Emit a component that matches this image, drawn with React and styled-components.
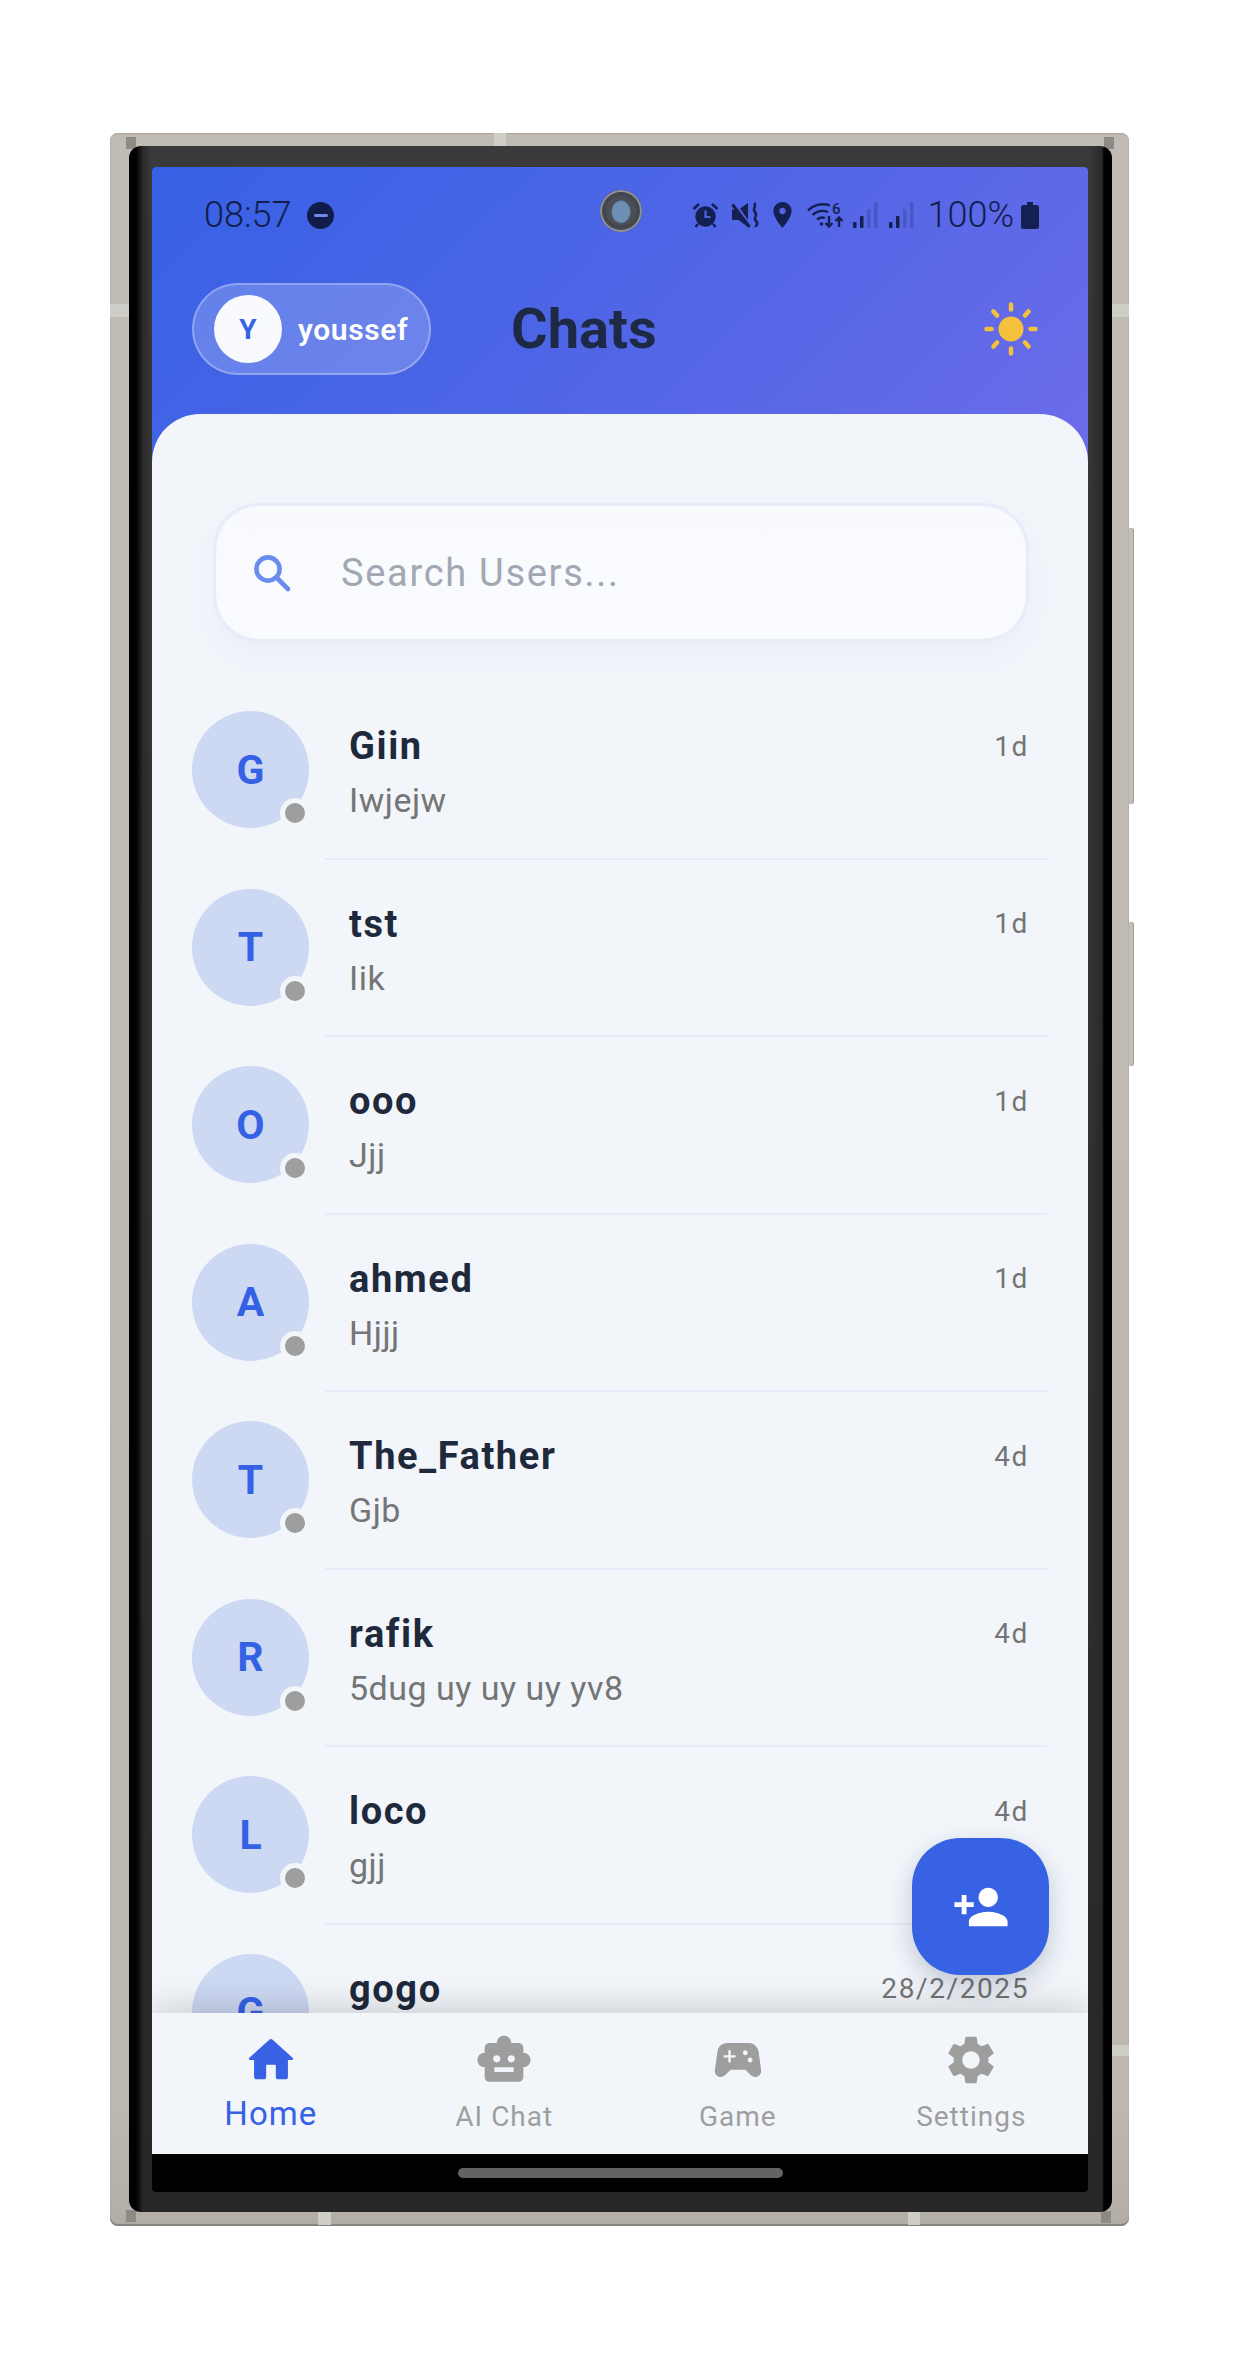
import styled, { createGlobalStyle } from 'styled-components'
import { MdPersonAdd, MdSettings, MdSmartToy, MdSportsEsports } from 'react-icons/md'

const GlobalStyle = createGlobalStyle`
  html, body {
    margin: 0;
    padding: 0;
    background: #fff;
  }
  * {
    box-sizing: border-box;
  }
`

const Page = styled.div`
  width: 1245px;
  height: 2359px;
  padding: 133px 0 0 110px;
  font-family: Roboto, "Liberation Sans", sans-serif;
`

// the phone body
const Frame = styled.div`
  position: relative;
  width: 1019px;
  height: 2093px;
  padding: 13px 17px 14px 19px;
  border-radius: 8px;
  background: linear-gradient(180deg, #c0bbb4 0%, #bdb8b0 94%, #b2ada5 100%);
  box-shadow: inset 0 -2px 1px #85817a, inset 0 1px 1px #a8a39c;
`

const Seam = styled.span`
  position: absolute;
  top: ${p => p.$top}px;
  left: ${p => p.$left}px;
  width: ${p => p.$w}px;
  height: ${p => p.$h}px;
  background: #cfcdc8;
`

const Notch = styled.span`
  position: absolute;
  top: ${p => p.$top}px;
  left: ${p => p.$left}px;
  width: 10px;
  height: 12px;
  background: #8f8a83;
`

const SideButton = styled.span`
  position: absolute;
  top: ${p => p.$top}px;
  right: -5px;
  width: 5px;
  height: ${p => p.$h}px;
  border-radius: 0 3px 3px 0;
  background: #c4c0b9;
  box-shadow: inset -1px 0 0 #a19c95;
`

const Bezel = styled.div`
  position: relative;
  width: 983px;
  height: 2066px;
  padding: 21px 24px 20px 23px;
  border-radius: 12px;
  background:
    linear-gradient(90deg, #000 0 7px, rgba(40, 40, 40, 0.9) 14px, transparent 23px, transparent 959px, rgba(40, 40, 40, 0.9) 973px, #000 975px, #000 100%),
    linear-gradient(180deg, #3a3a3a 0%, #333 50%, #272727 100%);
`

const BezelTop = styled.div`
  display: flex;
  flex-direction: column;
  height: 100%;
  border-radius: 4px;
  overflow: hidden;
  background: #000;
`

const AppArea = styled.div`
  position: relative;
  display: flex;
  flex-direction: column;
  height: 1987px;
  overflow: hidden;
`

const HomeBarArea = styled.div`
  flex: 1;
  display: flex;
  justify-content: center;
  padding-top: 14px;
`

const HomeBar = styled.div`
  width: 325px;
  height: 10px;
  border-radius: 5px;
  background: #636363;
`

const Header = styled.header`
  height: 295px;
  flex-shrink: 0;
  background: linear-gradient(135deg, #3761e5 0%, #4c65e6 45%, #6c6ce9 100%);
`

const StatusBar = styled.div`
  display: flex;
  align-items: center;
  height: 96px;
  padding: 0 49px 0 52px;
  color: #121d4c;
`

const Clock = styled.span`
  font-size: 36px;
  font-weight: 300;
  line-height: 1;
`

const DndBadge = styled.span`
  display: flex;
  align-items: center;
  justify-content: center;
  width: 27px;
  height: 27px;
  margin-left: 16px;
  border-radius: 50%;
  background: #111c4b;

  &::after {
    content: "";
    width: 14px;
    height: 3px;
    border-radius: 2px;
    background: #6f8ae8;
  }
`

const StatusRight = styled.div`
  display: flex;
  align-items: center;
  margin-left: auto;
`

const StatusIcon = styled.svg`
  display: block;
  flex-shrink: 0;
  margin-left: ${p => p.$gap || 0}px;
  fill: #14204f;
  overflow: visible;
`

const BatteryText = styled.span`
  margin-left: 13px;
  font-size: 36px;
  font-weight: 300;
  line-height: 1;
`

const Camera = styled.div`
  position: absolute;
  top: 23px;
  left: 448px;
  width: 42px;
  height: 42px;
  border-radius: 50%;
  background: radial-gradient(ellipse 10px 12px at 50% 52%, #6d8fb3 0 85%, #4b4e57 100%);
  box-shadow: inset 0 0 0 2px #8d9098, inset 0 0 0 6px #45474f;
`

const TitleBar = styled.div`
  display: flex;
  align-items: center;
  height: 92px;
  margin-top: 20px;
  padding: 0 50px 0 40px;
`

const UserPill = styled.div`
  display: flex;
  align-items: center;
  width: 239px;
  height: 92px;
  padding-left: 20px;
  border: 2px solid rgba(255, 255, 255, 0.28);
  border-radius: 46px;
  background: rgba(255, 255, 255, 0.2);
`

const UserAvatar = styled.div`
  display: flex;
  align-items: center;
  justify-content: center;
  width: 68px;
  height: 68px;
  border-radius: 50%;
  background: #f8fafd;
  color: #3362e4;
  font-size: 28px;
  font-weight: 700;
`

const UserName = styled.span`
  margin-left: 16px;
  color: #fff;
  font-size: 30px;
  font-weight: 600;
  letter-spacing: 0.6px;
`

const Title = styled.h1`
  margin: 0 0 0 80px;
  color: #1e2a45;
  font-size: 56px;
  font-weight: 700;
  line-height: 1;
`

const SunButton = styled.div`
  display: flex;
  margin-left: auto;
`

const Sheet = styled.main`
  flex: 1;
  min-height: 0;
  margin-top: -48px;
  padding-top: 93px;
  border-radius: 48px 48px 0 0;
  background: #f2f6fb;
  overflow: hidden;
`

const SearchBox = styled.div`
  display: flex;
  align-items: center;
  width: 808px;
  height: 131px;
  margin: 0 0 44px 65px;
  padding-left: 31px;
  border-radius: 42px;
  background: linear-gradient(180deg, #f8fafd, #fafbfe);
  box-shadow: 0 0 0 1px #f6f8fc, 0 0 0 4px #e6edf9, 0 14px 34px rgba(60, 90, 170, 0.06);
`

const SearchIcon = styled.svg`
  display: block;
  width: 48px;
  height: 48px;
  fill: none;
  stroke: #6a8deb;
  stroke-width: 2.3;
  stroke-linecap: round;
`

const Placeholder = styled.span`
  margin-left: 45px;
  color: #a1a8b4;
  font-size: 38px;
  letter-spacing: 1.7px;
`

const Row = styled.div`
  display: flex;
  height: 177.5px;
  padding-left: 40px;
`

const Avatar = styled.div`
  position: relative;
  display: flex;
  align-items: center;
  justify-content: center;
  flex-shrink: 0;
  width: 117px;
  height: 117px;
  margin-top: 29px;
  border-radius: 50%;
  background: #cdd8f3;
  color: #3562e5;
  font-size: 41px;
  font-weight: 700;
`

const StatusDot = styled.span`
  position: absolute;
  right: -1px;
  bottom: 0;
  width: 30px;
  height: 30px;
  border: 5px solid #f2f6fb;
  border-radius: 50%;
  background: #9e9e9e;
`

const RowBody = styled.div`
  flex: 1;
  display: flex;
  flex-direction: column;
  justify-content: center;
  margin: 0 41px 0 16px;
  padding: 6px 18px 0 24px;
  border-bottom: 2px solid #e6ecf7;
`

const TopLine = styled.div`
  display: flex;
  align-items: center;
  justify-content: space-between;
  height: 46px;
`

const Name = styled.span`
  color: #1e293b;
  font-size: 38px;
  font-weight: 700;
  letter-spacing: 1.6px;
`

const Time = styled.span`
  color: #757575;
  font-size: 28px;
  letter-spacing: 1.6px;
`

const Message = styled.div`
  height: 44px;
  margin-top: 9px;
  color: #757575;
  font-size: 34px;
  line-height: 44px;
  letter-spacing: 0.5px;
`

const Fab = styled.button`
  position: absolute;
  right: 39px;
  bottom: 179px;
  display: flex;
  align-items: center;
  justify-content: center;
  width: 137px;
  height: 137px;
  padding: 0;
  border: 0;
  border-radius: 48px;
  background: #3762e4;
  color: #fff;
  box-shadow: 0 10px 26px rgba(20, 30, 60, 0.22);
`

const BottomNav = styled.nav`
  position: relative;
  display: grid;
  grid-template-columns: repeat(4, 1fr);
  flex-shrink: 0;
  height: 141px;
  padding: 18px 0 0 2px;
  background: #f2f6fb;
  box-shadow: 0 -5px 32px rgba(0, 0, 0, 0.17);
`

const NavItem = styled.div`
  display: flex;
  flex-direction: column;
  align-items: center;
  color: ${p => (p.$active ? '#3762e4' : '#9e9e9e')};
`

const NavIcon = styled.svg`
  display: block;
  width: 58px;
  height: 58px;
  fill: currentColor;
`

const NavLabel = styled.span`
  margin-top: ${p => (p.$active ? 0 : 3)}px;
  font-size: ${p => (p.$active ? 33 : 28)}px;
  line-height: 50px;
  letter-spacing: 1px;
`

const chats = [
  { name: 'Giin', message: 'Iwjejw', time: '1d' },
  { name: 'tst', message: 'Iik', time: '1d' },
  { name: 'ooo', message: 'Jjj', time: '1d' },
  { name: 'ahmed', message: 'Hjjj', time: '1d' },
  { name: 'The_Father', message: 'Gjb', time: '4d' },
  { name: 'rafik', message: '5dug uy uy uy yv8', time: '4d' },
  { name: 'loco', message: 'gjj', time: '4d' },
  { name: 'gogo', message: '', time: '28/2/2025' },
]

const AlarmIcon = () => (
  <StatusIcon width="27" height="26" viewBox="0 0 27 26">
    <circle cx="13.5" cy="14.5" r="10.2" />
    <path d="M13.5 8.500v6.500h5" fill="none" stroke="#4c65e6" strokeWidth="2.2" />
    <path d="M1.500 7 7 2M25.500 7 20 2M6 22l-2.500 3M21 22l2.500 3" fill="none" stroke="#14204f" strokeWidth="2.6" />
  </StatusIcon>
)

const MuteIcon = () => (
  <StatusIcon $gap={13} width="27" height="26" viewBox="0 0 27 26">
    <path d="M0 7.500h6.500L16 1v24l-9.500-7H0z" />
    <path d="M3 1.500 19 25" fill="none" stroke="#4f66e7" strokeWidth="3" />
    <path d="M0.500 2.500 17.500 25" fill="none" stroke="#14204f" strokeWidth="3" />
    <path d="M22 1c3.500 3.500-2.500 5.500 1 9s-2.500 5.500 1 9-1 4 0 6" fill="none" stroke="#14204f" strokeWidth="2.600" />
  </StatusIcon>
)

const PinIcon = () => (
  <StatusIcon $gap={13} width="21" height="26" viewBox="5 2 14 20">
    <path d="M12 2C8.130 2 5 5.130 5 9c0 5.250 7 13 7 13s7-7.750 7-13c0-3.870-3.130-7-7-7zm0 9.500c-1.380 0-2.500-1.120-2.500-2.500s1.120-2.500 2.500-2.500 2.500 1.120 2.500 2.500-1.120 2.500-2.500 2.500z" />
  </StatusIcon>
)

const WifiIcon = () => (
  <StatusIcon $gap={14} width="38" height="28" viewBox="0 0 38 28">
    <g fill="none" stroke="#14204f" strokeWidth="2.400">
      <path d="M1 9.500C6 4 15 1.500 23 4.500" />
      <path d="M5.500 14C10 10 16 9 21 11" />
      <path d="M10 18.500c2.500-2 5.500-2.500 8-1.500" />
      <path d="M22 15v10M18.500 22l3.500 3.500 3.500-3.500M32 26V17M28.500 20l3.500-3.500 3.500 3.500" />
    </g>
    <circle cx="14.500" cy="23" r="1.800" />
    <text x="25" y="13" fontFamily="Roboto, sans-serif" fontSize="15" fontWeight="500" fill="#14204f">6</text>
  </StatusIcon>
)

const SignalIcon = ({ gap }) => (
  <StatusIcon $gap={gap} width="25" height="26" viewBox="0 0 25 26">
    <rect x="0" y="20" width="3.500" height="6" rx="1" />
    <rect x="7" y="14" width="3.500" height="12" rx="1" />
    <rect x="14" y="7" width="3.500" height="19" fill="#14204f" opacity="0.22" />
    <rect x="21" y="0" width="3.500" height="26" fill="#14204f" opacity="0.22" />
  </StatusIcon>
)

const BatteryIcon = () => (
  <StatusIcon $gap={7} width="18" height="27" viewBox="0 0 18 27">
    <path d="M6 0h6v3h3.500A2.500 2.500 0 0 1 18 5.500V24.500A2.500 2.500 0 0 1 15.500 27h-13A2.500 2.500 0 0 1 0 24.500V5.500A2.500 2.500 0 0 1 2.500 3H6z" />
  </StatusIcon>
)

const SunIcon = () => (
  <svg width="54" height="54" viewBox="0 0 54 54" fill="#f5c03c">
    <circle cx="27" cy="27" r="12.500" />
    <g stroke="#f5c03c" strokeWidth="4.500" strokeLinecap="round">
      <path d="M27 2.500v5M27 46.500v5M2.500 27h5M46.500 27h5M9.500 9.500l3.500 4M44.500 9.500l-3.500 4M9.500 44.500l3.500-4M44.500 44.500l-3.500-4" />
    </g>
  </svg>
)

const HomeIcon = () => (
  <NavIcon viewBox="0 0 24 24">
    <path d="M10 19v-5h4v5c0 .55.45 1 1 1h3c.55 0 1-.45 1-1v-7h1.700c.46 0 .68-.57.33-.87L12.670 3.600c-.38-.34-.96-.34-1.340 0l-8.360 7.530c-.34.3-.13.87.33.87H5v7c0 .55.45 1 1 1h3c.55 0 1-.45 1-1z" />
  </NavIcon>
)

const App = () => {
  return (
    <Page>
      <GlobalStyle />
      <Frame>
        <Seam $top={0} $left={384} $w={12} $h={13} />
        <Seam $top={171} $left={0} $w={19} $h={13} />
        <Seam $top={171} $left={1002} $w={17} $h={13} />
        <Seam $top={1912} $left={1002} $w={17} $h={11} />
        <Seam $top={2079} $left={208} $w={13} $h={13} />
        <Seam $top={2079} $left={798} $w={12} $h={13} />
        <Notch $top={4} $left={16} />
        <Notch $top={4} $left={994} />
        <Notch $top={2077} $left={16} />
        <Notch $top={2078} $left={991} />
        <SideButton $top={395} $h={276} />
        <SideButton $top={789} $h={144} />
        <Bezel>
          <BezelTop>
            <AppArea>
              <Header>
                <StatusBar>
                  <Clock>08:57</Clock>
                  <DndBadge />
                  <StatusRight>
                    <AlarmIcon />
                    <MuteIcon />
                    <PinIcon />
                    <WifiIcon />
                    <SignalIcon gap={8} />
                    <SignalIcon gap={11} />
                    <BatteryText>100%</BatteryText>
                    <BatteryIcon />
                  </StatusRight>
                </StatusBar>
                <TitleBar>
                  <UserPill>
                    <UserAvatar>Y</UserAvatar>
                    <UserName>youssef</UserName>
                  </UserPill>
                  <Title>Chats</Title>
                  <SunButton>
                    <SunIcon />
                  </SunButton>
                </TitleBar>
              </Header>
              <Camera />
              <Sheet>
                <SearchBox>
                  <SearchIcon viewBox="0 0 24 24">
                    <circle cx="10" cy="10" r="5.800" />
                    <path d="M14.500 14.500 20 20" />
                  </SearchIcon>
                  <Placeholder>Search Users...</Placeholder>
                </SearchBox>
                {chats.map(chat => (
                  <Row key={chat.name}>
                    <Avatar>
                      {chat.name[0].toUpperCase()}
                      <StatusDot />
                    </Avatar>
                    <RowBody>
                      <TopLine>
                        <Name>{chat.name}</Name>
                        <Time>{chat.time}</Time>
                      </TopLine>
                      <Message>{chat.message}</Message>
                    </RowBody>
                  </Row>
                ))}
              </Sheet>
              <BottomNav>
                <NavItem $active>
                  <HomeIcon />
                  <NavLabel $active>Home</NavLabel>
                </NavItem>
                <NavItem>
                  <MdSmartToy size={58} />
                  <NavLabel>AI Chat</NavLabel>
                </NavItem>
                <NavItem>
                  <MdSportsEsports size={58} />
                  <NavLabel>Game</NavLabel>
                </NavItem>
                <NavItem>
                  <MdSettings size={58} />
                  <NavLabel>Settings</NavLabel>
                </NavItem>
              </BottomNav>
              <Fab>
                <MdPersonAdd size={58} />
              </Fab>
            </AppArea>
            <HomeBarArea>
              <HomeBar />
            </HomeBarArea>
          </BezelTop>
        </Bezel>
      </Frame>
    </Page>
  )
}

export default App
